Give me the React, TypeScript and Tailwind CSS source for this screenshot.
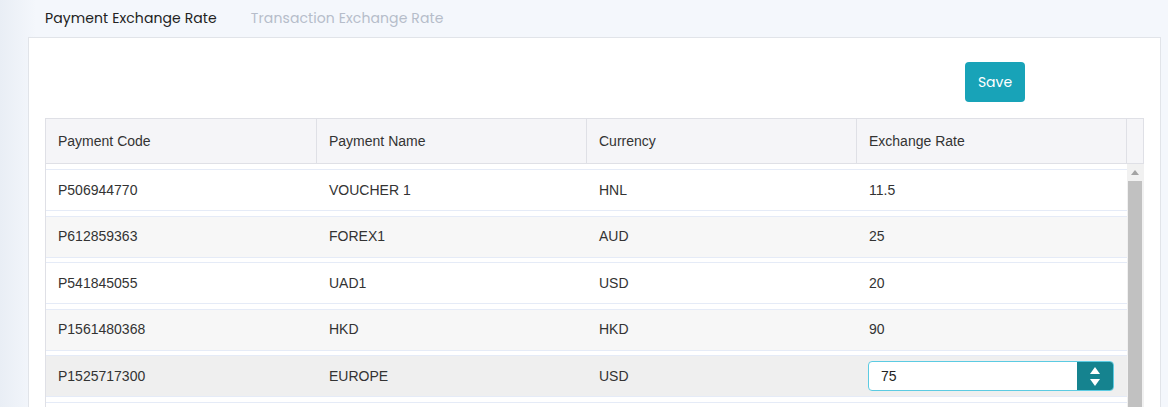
const rows = [
  { code: 'P506944770', name: 'VOUCHER 1', currency: 'HNL', rate: '11.5' },
  { code: 'P612859363', name: 'FOREX1', currency: 'AUD', rate: '25' },
  { code: 'P541845055', name: 'UAD1', currency: 'USD', rate: '20' },
  { code: 'P1561480368', name: 'HKD', currency: 'HKD', rate: '90' },
  { code: 'P1525717300', name: 'EUROPE', currency: 'USD', rate: '75', editing: true },
];

const columns = ['Payment Code', 'Payment Name', 'Currency', 'Exchange Rate'];
const widths = ['w-[271px]', 'w-[270px]', 'w-[270px]', 'w-[270px]'];

function RateInput({ value }: { value: string }) {
  return (
    <div className="-ml-[1px] flex h-[30px] w-[246px] overflow-hidden rounded-[4px] border border-[#5ccbe2] bg-white">
      <div className="flex flex-1 items-center pl-[12px] text-[14px] text-[#222]">{value}</div>
      <div className="flex w-[36px] flex-col items-center justify-center gap-[5px] bg-[#15838f]">
        <svg width="10" height="7" viewBox="0 0 10 7">
          <path d="M5 0L10 7H0Z" fill="#fff" />
        </svg>
        <svg width="10" height="7" viewBox="0 0 10 7">
          <path d="M0 0H10L5 7Z" fill="#fff" />
        </svg>
      </div>
    </div>
  );
}

export default function App() {
  return (
    <div className="h-[407px] overflow-hidden bg-[linear-gradient(to_right,#e9eef5,#f4f7fc_36px)] font-['Liberation_Sans',Arial,sans-serif]">
      <div className="flex h-[37px] items-center gap-[34px] pl-[45px] font-['Poppins','Inter',sans-serif] text-[14px] tracking-[0.1px]">
        <button className="text-[#222]">Payment Exchange Rate</button>
        <button className="text-[#b6bdca]">Transaction Exchange Rate</button>
      </div>

      <div className="ml-[28px] mr-[7px] h-[400px] border border-[#e1e4e9] bg-white px-[16px] pt-[24px]">
        <div className="flex">
          <button className="ml-[920px] h-[40px] w-[60px] rounded-[4px] bg-[#18a3b8] font-['Poppins','Inter',sans-serif] text-[14px] text-white">
            Save
          </button>
        </div>

        <div className="mt-[16px] border-l border-[#dfe0e6]">
          <div className="flex h-[46px] border-t border-r border-b border-[#dfe0e6] bg-[#f5f5f8] text-[14px] text-[#333]">
            {columns.map((c, i) => (
              <div key={c} className={`flex ${widths[i]} items-center border-r border-[#dfe0e6] pl-[12px]`}>
                {c}
              </div>
            ))}
            <div className="flex-1" />
          </div>

          <div className="flex">
            <div className="flex-1 pt-[5px]">
              {rows.map((r, i) => (
                <div
                  key={r.code}
                  className={`mb-[4.5px] flex h-[42px] border-y border-[#e5ebf7] text-[14px] text-[#333] ${
                    r.editing ? 'bg-[#efefef]' : i % 2 ? 'bg-[#f7f7f7]' : 'bg-white'
                  }`}
                >
                  <div className="flex w-[271px] items-center pl-[12px]">{r.code}</div>
                  <div className="flex w-[270px] items-center pl-[12px]">{r.name}</div>
                  <div className="flex w-[270px] items-center pl-[12px]">{r.currency}</div>
                  <div className="flex w-[270px] items-center pl-[12px]">
                    {r.editing ? <RateInput value={r.rate} /> : r.rate}
                  </div>
                </div>
              ))}
              <div className="h-[42px] border-t border-[#e5ebf7] bg-white" />
            </div>
            <div className="flex w-[17px] flex-col bg-[#f1f1f1] pl-[1px] pr-[2px]">
              <div className="flex h-[17px] items-center justify-center">
                <svg width="8" height="5" viewBox="0 0 8 5">
                  <path d="M4 0L8 5H0Z" fill="#a3a3a3" />
                </svg>
              </div>
              <div className="h-[300px] bg-[#c1c1c1]" />
            </div>
          </div>
        </div>
      </div>
    </div>
  );
}
